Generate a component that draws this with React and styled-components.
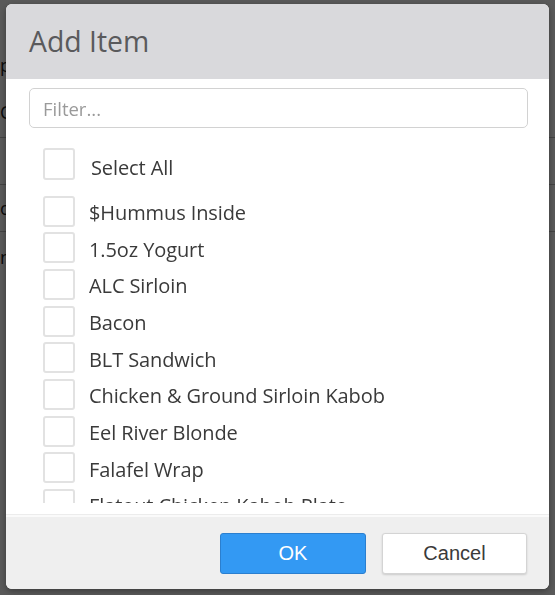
import React from "react";
import styled, { createGlobalStyle } from "styled-components";

const Global = createGlobalStyle`
  html, body { margin: 0; padding: 0; }
  body {
    width: 555px;
    height: 595px;
    overflow: hidden;
    background: #ffffff;
    font-family: "Open Sans", "Noto Sans", sans-serif;
  }
`;

const Page = styled.div`
  width: 555px;
  height: 595px;
  display: flex;
  flex-direction: column;
  background: #ffffff;
  color: #222;
  font-family: "Open Sans", sans-serif;
`;

const PageRow = styled.div`
  height: ${(p) => p.h}px;
  border-bottom: 1px solid ${(p) => (p.line ? "#bdbdbd" : "transparent")};
  display: flex;
  align-items: center;
  font-size: 18px;
  box-sizing: border-box;
`;

const Overlay = styled.div`
  position: fixed;
  inset: 0;
  background: rgba(0, 0, 0, 0.65);
`;

const Modal = styled.div`
  position: fixed;
  left: 6px;
  top: 4px;
  width: 543px;
  height: 585px;
  border-radius: 6px;
  overflow: hidden;
  background: #ffffff;
  display: flex;
  flex-direction: column;
  box-shadow: 0 2px 6px rgba(0, 0, 0, 0.35);
`;

const Header = styled.div`
  height: 75px;
  flex: none;
  background: #d9d9dc;
  display: flex;
  align-items: center;
  padding-left: 23px;
  box-sizing: border-box;
`;

const Title = styled.h2`
  margin: 0;
  margin-top: -1px;
  font-family: "Open Sans", sans-serif;
  font-weight: 400;
  font-size: 28.4px;
  color: #5a5a5c;
`;

const Body = styled.div`
  flex: 1;
  display: flex;
  flex-direction: column;
  padding: 9px 21px 11px 23px;
  min-height: 0;
`;

const FilterInput = styled.input`
  height: 40px;
  flex: none;
  box-sizing: border-box;
  border: 1px solid #d2d2d2;
  border-radius: 5px;
  padding: 0 13px;
  font-family: "Open Sans", sans-serif;
  font-size: 18.5px;
  color: #333;
  outline: none;
  &::placeholder { color: #9a9a9a; }
`;

const List = styled.div`
  flex: 1;
  min-height: 0;
  overflow: hidden;
  margin-top: 20px;
  padding-left: 14px;
  display: flex;
  flex-direction: column;
  gap: 5.67px;
`;

const Row = styled.label`
  display: flex;
  align-items: center;
  flex: none;
  height: 31px;
  gap: ${(p) => (p.all ? 16 : 14)}px;
  margin-bottom: ${(p) => (p.all ? 11 : 0)}px;
  cursor: pointer;
`;

const Box = styled.span`
  width: 32px;
  height: ${(p) => (p.all ? 32 : 31)}px;
  box-sizing: border-box;
  border: 2px solid #e2e2e2;
  border-radius: 3px;
  background: #fff;
  flex: none;
`;

const Label = styled.span`
  font-family: "Open Sans", sans-serif;
  font-size: 20px;
  color: #3a3a3a;
  white-space: nowrap;
  letter-spacing: -0.1px;
  padding-top: ${(p) => (p.all ? 8 : 3)}px;
`;

const Footer = styled.div`
  height: 75px;
  flex: none;
  background: #efefef;
  border-top: 1px solid #ececec;
  box-shadow: inset 0 2px 0 #fafafa;
  box-sizing: border-box;
  display: flex;
  justify-content: flex-end;
  align-items: flex-start;
  padding: 18px 22px 0 0;
  gap: 16px;
`;

const Button = styled.button`
  height: 41px;
  width: ${(p) => (p.primary ? 146 : 145)}px;
  box-sizing: border-box;
  border-radius: 3px;
  font-family: "Liberation Sans", Arial, sans-serif;
  font-size: 20px;
  cursor: pointer;
  border: 1px solid ${(p) => (p.primary ? "#2b7fcf" : "#d4d4d4")};
  background: ${(p) => (p.primary ? "#3399f3" : "#ffffff")};
  color: ${(p) => (p.primary ? "#ffffff" : "#3a3a3a")};
  box-shadow: ${(p) => (p.primary ? "none" : "0 1px 2px rgba(0,0,0,0.15)")};
`;

const items = [
  "$Hummus Inside",
  "1.5oz Yogurt",
  "ALC Sirloin",
  "Bacon",
  "BLT Sandwich",
  "Chicken & Ground Sirloin Kabob",
  "Eel River Blonde",
  "Falafel Wrap",
  "Flatout Chicken Kabob Plate",
  "Fries",
  "Greek Salad",
];

export default function App() {
  return (
    <>
      <Global />
      <Page>
        <PageRow h={44} />
        <PageRow h={42}>p</PageRow>
        <PageRow h={52} line>C</PageRow>
        <PageRow h={47} line />
        <PageRow h={47} line>o</PageRow>
        <PageRow h={50}>n</PageRow>
      </Page>
      <Overlay />
      <Modal>
        <Header>
          <Title>Add Item</Title>
        </Header>
        <Body>
          <FilterInput placeholder="Filter..." />
          <List>
            <Row all>
              <Box all />
              <Label all>Select All</Label>
            </Row>
            {items.map((it) => (
              <Row key={it}>
                <Box />
                <Label>{it}</Label>
              </Row>
            ))}
          </List>
        </Body>
        <Footer>
          <Button primary>OK</Button>
          <Button>Cancel</Button>
        </Footer>
      </Modal>
    </>
  );
}
